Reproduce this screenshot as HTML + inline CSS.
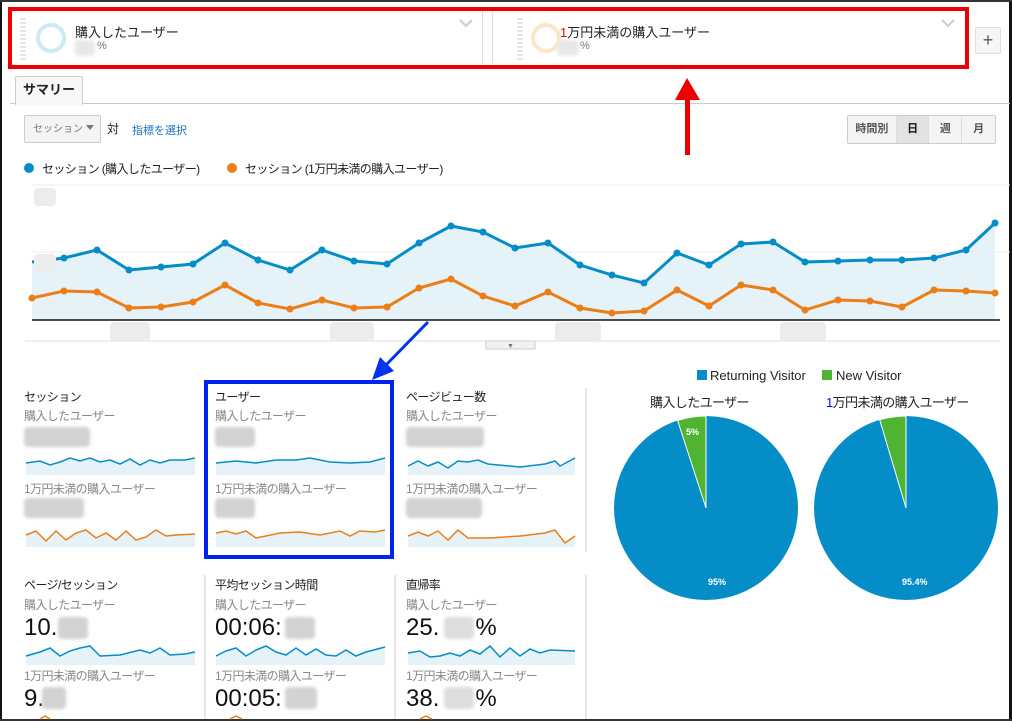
<!DOCTYPE html>
<html><head><meta charset="utf-8"><style>
body{margin:0;width:1012px;height:721px;overflow:hidden;background:#fff;font-family:"Liberation Sans","Noto Sans CJK JP",sans-serif;position:relative}
.a{position:absolute;white-space:nowrap}
.g{color:#888;font-size:12px;letter-spacing:-0.6px}
.t{color:#222;font-size:13px}
.m{color:#222;font-size:12px;letter-spacing:-0.6px}
.big{color:#111;font-size:24px}
.blur{position:absolute;background:#d2d2d2;border-radius:4px;filter:blur(1.5px)}
</style></head><body>
<div class="a" style="left:0;top:0;width:2px;height:721px;background:#111"></div>
<div class="a" style="left:1009px;top:0;width:3px;height:721px;background:#111"></div>
<div class="a" style="left:0;top:0;width:1012px;height:2px;background:#333"></div>
<div class="a" style="left:0;top:719px;width:1012px;height:2px;background:#333"></div>
<!-- segments -->
<div class="a" style="left:12px;top:11px;width:470px;height:52px;border-right:1px solid #ddd"></div>
<div class="a" style="left:492px;top:11px;width:472px;height:52px;border-left:1px solid #ddd"></div>
<div class="a" style="left:20px;top:18px;width:6px;height:42px;background:repeating-linear-gradient(#e6e6e6 0 2px,#fff 2px 4px)"></div>
<div class="a" style="left:517px;top:18px;width:6px;height:42px;background:repeating-linear-gradient(#e6e6e6 0 2px,#fff 2px 4px)"></div>
<div class="a" style="left:36px;top:23px;width:22px;height:22px;border:4px solid #cde9f4;border-radius:50%"></div>
<div class="a" style="left:531px;top:23px;width:22px;height:22px;border:4px solid #fbe6c8;border-radius:50%"></div>
<div class="a t" style="left:75px;top:22px;font-size:13px">購入したユーザー</div>
<div class="a t" style="left:560px;top:22px;font-size:13px"><span style="color:#e00">1</span>万円未満の購入ユーザー</div>
<div class="blur" style="left:75px;top:40px;width:20px;height:16px;background:#e8e8e8"></div>
<div class="a" style="left:97px;top:40px;font-size:11px;color:#777">%</div>
<div class="blur" style="left:557px;top:40px;width:22px;height:16px;background:#e8e8e8"></div>
<div class="a" style="left:580px;top:40px;font-size:11px;color:#777">%</div>
<svg class="a" style="left:458px;top:18px" width="16" height="10"><polyline points="2,2 8,8 14,2" fill="none" stroke="#ccc" stroke-width="2"/></svg>
<svg class="a" style="left:940px;top:18px" width="16" height="10"><polyline points="2,2 8,8 14,2" fill="none" stroke="#ccc" stroke-width="2"/></svg>
<div class="a" style="left:8px;top:7px;width:953px;height:54px;border:4px solid #e00"></div>
<div class="a" style="left:975px;top:27px;width:24px;height:25px;border:1px solid #ddd;border-radius:2px;background:#f6f6f6;color:#555;font-size:18px;text-align:center;line-height:24px">+</div>
<!-- tab -->
<div class="a" style="left:10px;top:103px;width:1000px;height:1px;background:#ccc"></div>
<div class="a" style="left:15px;top:76px;width:66px;height:28px;border:1px solid #ccc;border-bottom:none;background:#f8f8f8;border-radius:2px 2px 0 0;font-size:13px;font-weight:bold;text-align:center;line-height:26px;color:#222">サマリー</div>
<!-- controls -->
<div class="a" style="left:24px;top:115px;width:77px;height:28px;border:1px solid #ccc;border-radius:2px;background:#f4f4f4;font-size:10px;color:#777;line-height:28px;padding-left:8px;box-sizing:border-box">セッション</div>
<div class="a" style="left:86px;top:125px;width:0;height:0;border-left:4px solid transparent;border-right:4px solid transparent;border-top:5px solid #777"></div>
<div class="a t" style="left:107px;top:120px;font-size:12px">対</div>
<div class="a" style="left:132px;top:122px;font-size:11px;color:#1a73c0">指標を選択</div>
<div class="a" style="left:847px;top:115px;width:147px;height:27px;border:1px solid #ccc;border-radius:2px;background:#f4f4f4;font-size:11px;font-weight:bold;color:#555;display:flex">
<div style="width:48px;text-align:center;line-height:27px;border-right:1px solid #ddd">時間別</div>
<div style="width:32px;text-align:center;line-height:27px;background:#e2e2e2;color:#111;border-right:1px solid #ddd">日</div>
<div style="width:32px;text-align:center;line-height:27px;border-right:1px solid #ddd">週</div>
<div style="width:33px;text-align:center;line-height:27px">月</div></div>
<!-- legend -->
<div class="a" style="left:24px;top:163px;width:10px;height:10px;border-radius:50%;background:#058dc7"></div>
<div class="a m" style="left:42px;top:160px">セッション (購入したユーザー)</div>
<div class="a" style="left:227px;top:163px;width:10px;height:10px;border-radius:50%;background:#ed7e17"></div>
<div class="a m" style="left:245px;top:160px">セッション (1万円未満の購入ユーザー)</div>
<svg class="a" style="left:0;top:0" width="1012" height="721">
<line x1="32" y1="185" x2="1010" y2="185" stroke="#eee"/>
<line x1="32" y1="252" x2="1010" y2="252" stroke="#eee"/>
<polygon fill="#e5f2f8" points="32,320 32,262 64,258 97,250 129,270 161,267 193,264 225,243 258,260 290,270 322,250 354,261 387,264 419,243 451,226 483,232 515,248 548,243 580,265 612,275 644,283 677,253 709,265 741,244 773,242 805,262 838,261 870,260 902,260 934,258 966,250 995,223 995,320"/>
<polyline fill="none" stroke="#058dc7" stroke-width="3" points="32,262 64,258 97,250 129,270 161,267 193,264 225,243 258,260 290,270 322,250 354,261 387,264 419,243 451,226 483,232 515,248 548,243 580,265 612,275 644,283 677,253 709,265 741,244 773,242 805,262 838,261 870,260 902,260 934,258 966,250 995,223"/>
<polyline fill="none" stroke="#ed7e17" stroke-width="3" points="32,298 64,291 97,292 129,308 161,307 193,302 225,285 258,303 290,309 322,300 354,308 387,307 419,288 451,279 483,296 515,306 548,292 580,308 612,313 644,311 677,290 709,306 741,285 773,290 805,310 838,300 870,301 902,307 934,290 966,291 995,293"/>
<g fill="#058dc7"><circle cx="64" cy="258" r="3.5"/><circle cx="97" cy="250" r="3.5"/><circle cx="129" cy="270" r="3.5"/><circle cx="161" cy="267" r="3.5"/><circle cx="193" cy="264" r="3.5"/><circle cx="225" cy="243" r="3.5"/><circle cx="258" cy="260" r="3.5"/><circle cx="290" cy="270" r="3.5"/><circle cx="322" cy="250" r="3.5"/><circle cx="354" cy="261" r="3.5"/><circle cx="387" cy="264" r="3.5"/><circle cx="419" cy="243" r="3.5"/><circle cx="451" cy="226" r="3.5"/><circle cx="483" cy="232" r="3.5"/><circle cx="515" cy="248" r="3.5"/><circle cx="548" cy="243" r="3.5"/><circle cx="580" cy="265" r="3.5"/><circle cx="612" cy="275" r="3.5"/><circle cx="644" cy="283" r="3.5"/><circle cx="677" cy="253" r="3.5"/><circle cx="709" cy="265" r="3.5"/><circle cx="741" cy="244" r="3.5"/><circle cx="773" cy="242" r="3.5"/><circle cx="805" cy="262" r="3.5"/><circle cx="838" cy="261" r="3.5"/><circle cx="870" cy="260" r="3.5"/><circle cx="902" cy="260" r="3.5"/><circle cx="934" cy="258" r="3.5"/><circle cx="966" cy="250" r="3.5"/><circle cx="995" cy="223" r="3.5"/></g>
<g fill="#ed7e17"><circle cx="32" cy="298" r="3.5"/><circle cx="64" cy="291" r="3.5"/><circle cx="97" cy="292" r="3.5"/><circle cx="129" cy="308" r="3.5"/><circle cx="161" cy="307" r="3.5"/><circle cx="193" cy="302" r="3.5"/><circle cx="225" cy="285" r="3.5"/><circle cx="258" cy="303" r="3.5"/><circle cx="290" cy="309" r="3.5"/><circle cx="322" cy="300" r="3.5"/><circle cx="354" cy="308" r="3.5"/><circle cx="387" cy="307" r="3.5"/><circle cx="419" cy="288" r="3.5"/><circle cx="451" cy="279" r="3.5"/><circle cx="483" cy="296" r="3.5"/><circle cx="515" cy="306" r="3.5"/><circle cx="548" cy="292" r="3.5"/><circle cx="580" cy="308" r="3.5"/><circle cx="612" cy="313" r="3.5"/><circle cx="644" cy="311" r="3.5"/><circle cx="677" cy="290" r="3.5"/><circle cx="709" cy="306" r="3.5"/><circle cx="741" cy="285" r="3.5"/><circle cx="773" cy="290" r="3.5"/><circle cx="805" cy="310" r="3.5"/><circle cx="838" cy="300" r="3.5"/><circle cx="870" cy="301" r="3.5"/><circle cx="902" cy="307" r="3.5"/><circle cx="934" cy="290" r="3.5"/><circle cx="966" cy="291" r="3.5"/><circle cx="995" cy="293" r="3.5"/></g>
<line x1="32" y1="320" x2="1000" y2="320" stroke="#111" stroke-width="1.5"/>
<line x1="25" y1="341" x2="1000" y2="341" stroke="#ddd"/>
<rect x="486" y="341" width="49" height="8" fill="#f2f2f2" stroke="#ccc"/>
<text x="507" y="348" font-size="7" fill="#777">▼</text>
<g fill="#ececec"><rect x="34" y="188" width="22" height="18" rx="4"/><rect x="34" y="254" width="22" height="18" rx="4"/><rect x="110" y="322" width="40" height="20" rx="4"/><rect x="330" y="322" width="44" height="20" rx="4"/><rect x="555" y="322" width="46" height="20" rx="4"/><rect x="780" y="322" width="46" height="20" rx="4"/></g>
<!-- arrows -->
<rect x="685" y="98" width="5" height="57" fill="#e00"/>
<polygon points="687,78 675,100 700,100" fill="#e00"/>
<line x1="428" y1="322" x2="385" y2="366" stroke="#0033ee" stroke-width="3"/>
<polygon points="372,380 380,357 394,371" fill="#0033ee"/>
<!-- panel separators -->
<line x1="205" y1="575" x2="205" y2="719" stroke="#ccc"/>
<line x1="395" y1="575" x2="395" y2="719" stroke="#ccc"/>
<line x1="586" y1="388" x2="586" y2="552" stroke="#ccc"/>
<line x1="586" y1="575" x2="586" y2="719" stroke="#ccc"/>
<!-- sparklines -->
<g stroke-width="1.5">
<polygon fill="#e5f2f8" points="26,475 26,463 40,461 50,465 60,462 70,458 80,461 90,458 100,462 110,460 120,464 130,459 140,465 150,460 160,463 170,460 185,460 195,458 195,475"/>
<polyline fill="none" stroke="#058dc7" points="26,463 40,461 50,465 60,462 70,458 80,461 90,458 100,462 110,460 120,464 130,459 140,465 150,460 160,463 170,460 185,460 195,458"/>
<polygon fill="#e5f2f8" points="26,547 26,535 36,531 46,541 56,531 66,540 76,533 86,530 96,538 106,533 116,540 126,531 136,540 146,537 156,530 166,536 176,535 195,534 195,547"/>
<polyline fill="none" stroke="#ed7e17" points="26,535 36,531 46,541 56,531 66,540 76,533 86,530 96,538 106,533 116,540 126,531 136,540 146,537 156,530 166,536 176,535 195,534"/>
<polygon fill="#e5f2f8" points="216,475 216,463 236,461 256,463 276,460 296,460 310,458 330,462 350,463 370,462 385,458 385,475"/>
<polyline fill="none" stroke="#058dc7" points="216,463 236,461 256,463 276,460 296,460 310,458 330,462 350,463 370,462 385,458"/>
<polygon fill="#e5f2f8" points="216,547 216,533 226,531 236,534 246,531 256,538 266,536 280,533 300,532 320,535 340,531 350,536 360,531 375,532 385,530 385,547"/>
<polyline fill="none" stroke="#ed7e17" points="216,533 226,531 236,534 246,531 256,538 266,536 280,533 300,532 320,535 340,531 350,536 360,531 375,532 385,530"/>
<polygon fill="#e5f2f8" points="408,475 408,466 418,461 428,466 438,462 448,468 458,461 468,462 478,460 488,464 520,467 545,464 555,461 560,466 575,458 575,475"/>
<polyline fill="none" stroke="#058dc7" points="408,466 418,461 428,466 438,462 448,468 458,461 468,462 478,460 488,464 520,467 545,464 555,461 560,466 575,458"/>
<polygon fill="#e5f2f8" points="408,547 408,536 418,532 428,536 438,531 448,540 458,530 468,538 490,538 520,536 545,533 555,530 565,543 575,536 575,547"/>
<polyline fill="none" stroke="#ed7e17" points="408,536 418,532 428,536 438,531 448,540 458,530 468,538 490,538 520,536 545,533 555,530 565,543 575,536"/>
<polygon fill="#e5f2f8" points="26,665 26,656 40,652 50,648 60,656 70,651 80,648 90,646 100,656 120,655 140,650 150,653 160,648 170,655 185,654 195,652 195,665"/>
<polyline fill="none" stroke="#058dc7" points="26,656 40,652 50,648 60,656 70,651 80,648 90,646 100,656 120,655 140,650 150,653 160,648 170,655 185,654 195,652"/>
<polygon fill="#e5f2f8" points="216,665 216,656 226,651 236,648 246,656 256,650 266,646 276,652 286,655 296,648 306,655 316,649 326,655 336,656 346,650 356,656 366,652 385,647 385,665"/>
<polyline fill="none" stroke="#058dc7" points="216,656 226,651 236,648 246,656 256,650 266,646 276,652 286,655 296,648 306,655 316,649 326,655 336,656 346,650 356,656 366,652 385,647"/>
<polygon fill="#e5f2f8" points="408,665 408,653 420,651 430,657 440,656 450,653 460,656 470,650 480,654 490,646 500,657 510,648 520,656 530,649 540,653 550,650 575,651 575,665"/>
<polyline fill="none" stroke="#058dc7" points="408,653 420,651 430,657 440,656 450,653 460,656 470,650 480,654 490,646 500,657 510,648 520,656 530,649 540,653 550,650 575,651"/>
<polyline fill="none" stroke="#ed7e17" points="40,719 45,716 50,719"/>
<polyline fill="none" stroke="#ed7e17" points="230,719 236,716 242,719"/>
<polyline fill="none" stroke="#ed7e17" points="420,719 426,716 432,719"/>
</g>
<rect x="206" y="382" width="186" height="175" fill="none" stroke="#0022ee" stroke-width="4"/>
<!-- pies -->
<circle cx="706" cy="508" r="92" fill="#058dc7"/>
<path d="M706,508 L706,416 A92,92 0 0 0 677.6,420.5 Z" fill="#50b432" stroke="#fff"/>
<circle cx="906" cy="508" r="92" fill="#058dc7"/>
<path d="M906,508 L906,416 A92,92 0 0 0 879.7,419.8 Z" fill="#50b432" stroke="#fff"/>
<g font-size="9" font-weight="bold" fill="#fff" font-family="Liberation Sans"><text x="686" y="435">5%</text><text x="708" y="585">95%</text><text x="902" y="585">95.4%</text></g>
<rect x="697" y="370" width="10" height="10" fill="#058dc7"/><rect x="822" y="370" width="10" height="10" fill="#50b432"/>
</svg>
<div class="a t" style="left:710px;top:368px">Returning Visitor</div>
<div class="a t" style="left:836px;top:368px">New Visitor</div>
<div class="a m" style="left:650px;top:392px;font-size:13px">購入したユーザー</div>
<div class="a m" style="left:826px;top:392px;font-size:13px"><span style="color:#00f">1</span>万円未満の購入ユーザー</div>
<!-- metric panels -->
<div class="a m" style="left:24px;top:388px">セッション</div>
<div class="a g" style="left:24px;top:407px">購入したユーザー</div>
<div class="blur" style="left:24px;top:427px;width:66px;height:20px"></div>
<div class="a g" style="left:24px;top:480px">1万円未満の購入ユーザー</div>
<div class="blur" style="left:24px;top:498px;width:60px;height:20px"></div>
<div class="a m" style="left:215px;top:388px">ユーザー</div>
<div class="a g" style="left:215px;top:407px">購入したユーザー</div>
<div class="blur" style="left:215px;top:427px;width:40px;height:20px"></div>
<div class="a g" style="left:215px;top:480px">1万円未満の購入ユーザー</div>
<div class="blur" style="left:215px;top:498px;width:40px;height:20px"></div>
<div class="a m" style="left:406px;top:388px">ページビュー数</div>
<div class="a g" style="left:406px;top:407px">購入したユーザー</div>
<div class="blur" style="left:406px;top:427px;width:78px;height:20px"></div>
<div class="a g" style="left:406px;top:480px">1万円未満の購入ユーザー</div>
<div class="blur" style="left:406px;top:498px;width:76px;height:20px"></div>
<div class="a m" style="left:24px;top:576px">ページ/セッション</div>
<div class="a g" style="left:24px;top:596px">購入したユーザー</div>
<div class="a big" style="left:24px;top:614px">10.</div><div class="blur" style="left:58px;top:617px;width:30px;height:22px"></div>
<div class="a g" style="left:24px;top:667px">1万円未満の購入ユーザー</div>
<div class="a big" style="left:24px;top:685px">9.</div><div class="blur" style="left:42px;top:687px;width:24px;height:22px"></div>
<div class="a m" style="left:215px;top:576px">平均セッション時間</div>
<div class="a g" style="left:215px;top:596px">購入したユーザー</div>
<div class="a big" style="left:215px;top:614px">00:06:</div><div class="blur" style="left:285px;top:617px;width:30px;height:22px"></div>
<div class="a g" style="left:215px;top:667px">1万円未満の購入ユーザー</div>
<div class="a big" style="left:215px;top:685px">00:05:</div><div class="blur" style="left:285px;top:687px;width:32px;height:22px"></div>
<div class="a m" style="left:406px;top:576px">直帰率</div>
<div class="a g" style="left:406px;top:596px">購入したユーザー</div>
<div class="a big" style="left:406px;top:614px">25.<span style="display:inline-block;width:36px"></span>%</div><div class="blur" style="left:444px;top:617px;width:30px;height:22px;background:#ddd"></div>
<div class="a g" style="left:406px;top:667px">1万円未満の購入ユーザー</div>
<div class="a big" style="left:406px;top:685px">38.<span style="display:inline-block;width:36px"></span>%</div><div class="blur" style="left:444px;top:687px;width:30px;height:22px;background:#ddd"></div>
</body></html>
